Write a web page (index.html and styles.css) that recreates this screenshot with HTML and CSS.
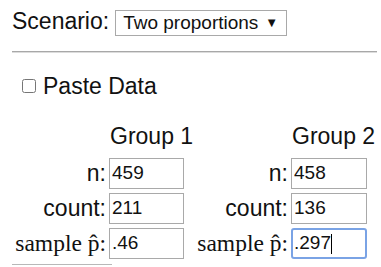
FILE: index.html
```html
<!DOCTYPE html>
<html>
<head>
<meta charset="utf-8">
<link rel="stylesheet" href="styles.css">
</head>
<body>
<div class="page">
  <div class="scenario">
    <span class="label">Scenario:</span>
    <span class="select-box">
      <select class="select"><option>Two proportions</option></select>
      <span class="arrow">▼</span>
    </span>
  </div>
  <div class="rule"></div>
  <label class="paste"><input type="checkbox" class="check"><span>Paste Data</span></label>
  <div class="groups">
    <div class="gname g1">Group 1</div>
    <div class="gname g2">Group 2</div>

    <div class="lbl">n:</div>
    <input class="field" value="459">
    <div class="lbl">n:</div>
    <input class="field" value="458">

    <div class="lbl">count:</div>
    <input class="field" value="211">
    <div class="lbl">count:</div>
    <input class="field" value="136">

    <div class="lbl serif">sample p̂:</div>
    <input class="field" value=".46">
    <div class="lbl serif">sample p̂:</div>
    <span class="focus-wrap"><input class="field focused" value=".297"><span class="caret"></span></span>
  </div>
  <div class="bottom-rule"></div>
</div>
</body>
</html>
```

FILE: styles.css
```css
html, body {
  margin: 0;
  padding: 0;
  background: #fff;
}
.page {
  padding: 8px 4px 0 12px;
  font-family: "Liberation Sans", Arial, sans-serif;
  color: #111;
}
.scenario {
  display: flex;
  align-items: baseline;
  gap: 6px;
}
.label {
  font-size: 23px;
}
.select-box {
  display: inline-flex;
  align-items: center;
  width: 172px;
  height: 26px;
  box-sizing: border-box;
  border: 1px solid #a9a9a9;
  background: #fff;
}
.select {
  appearance: none;
  -webkit-appearance: none;
  border: none;
  background: transparent;
  font-family: "Liberation Sans", Arial, sans-serif;
  font-size: 19px;
  color: #111;
  padding: 0 0 0 7px;
  margin: 0;
  height: 24px;
  flex: 1;
  min-width: 0;
  outline: none;
}
.arrow {
  font-size: 13px;
  margin-right: 8px;
  color: #111;
}
.rule {
  margin-top: 15px;
  height: 1px;
  border-top: 1px solid #a8a8a8;
  background: #dcdcdc;
}
.paste {
  display: flex;
  align-items: center;
  gap: 7px;
  margin: 20px 0 0 10px;
  font-size: 23px;
}
.check {
  margin: 0;
  width: 14px;
  height: 14px;
}
.groups {
  display: grid;
  grid-template-columns: 94px 75px 101px 76px;
  column-gap: 3px;
  row-gap: 4px;
  margin-top: 23px;
  align-items: center;
}
.gname {
  font-size: 23px;
  line-height: 26px;
  padding-left: 1px;
  margin-bottom: 5px;
  white-space: nowrap;
}
.g1 { grid-column: 2; }
.g2 { grid-column: 4; }
.lbl {
  font-size: 23px;
  text-align: right;
  white-space: nowrap;
}
.serif {
  font-family: "Liberation Serif", "Times New Roman", serif;
  font-size: 23.5px;
  justify-self: end;
}
.field {
  box-sizing: border-box;
  width: 100%;
  height: 31px;
  margin: 0;
  border: 1px solid #a9a9a9;
  padding: 0 2px;
  font-family: "Liberation Sans", Arial, sans-serif;
  font-size: 19px;
  color: #111;
  background: #fff;
  outline: none;
}
.focus-wrap {
  position: relative;
  display: block;
}
.focused {
  border: 2px solid #7aa3e5;
  border-radius: 3px;
  padding: 0 1px;
}
.caret {
  position: absolute;
  left: 40px;
  top: 6px;
  width: 1px;
  height: 20px;
  background: #000;
}
.bottom-rule {
  margin-top: 5px;
  width: 100px;
  border-top: 1px solid #b8b8b8;
}
```
